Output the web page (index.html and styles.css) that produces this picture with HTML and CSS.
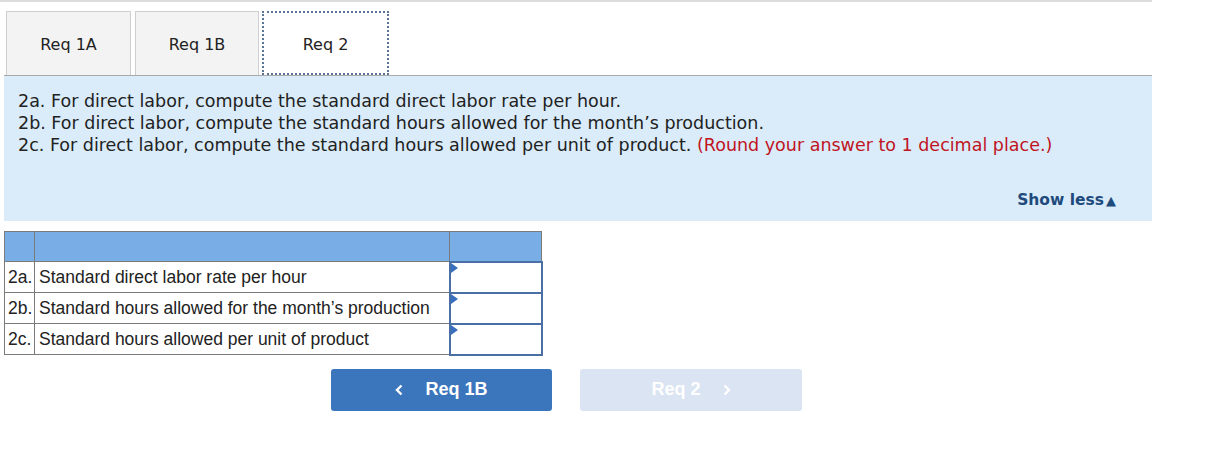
FILE: index.html
```html
<!DOCTYPE html>
<html>
<head>
<meta charset="utf-8">
<link rel="stylesheet" href="styles.css">
</head>
<body>
<div class="page">
  <div class="topbar"></div>
  <div class="tabs">
    <div class="tab t1">Req 1A</div>
    <div class="tab t2">Req 1B</div>
    <div class="tab t3 active">Req 2</div>
  </div>
  <div class="panel">
    <p class="line">2a. For direct labor, compute the standard direct labor rate per hour.</p>
    <p class="line">2b. For direct labor, compute the standard hours allowed for the month’s production.</p>
    <p class="line">2c. For direct labor, compute the standard hours allowed per unit of product. <span class="red">(Round your answer to 1 decimal place.)</span></p>
    <div class="showless">Show less<span class="tri">▲</span></div>
  </div>
  <table class="grid">
    <tr class="head"><td class="c1"></td><td class="c2"></td><td class="c3"></td></tr>
    <tr><td class="c1">2a.</td><td class="c2">Standard direct labor rate per hour</td><td class="c3 inp"><span class="flag"></span></td></tr>
    <tr><td class="c1">2b.</td><td class="c2">Standard hours allowed for the month’s production</td><td class="c3 inp"><span class="flag"></span></td></tr>
    <tr><td class="c1">2c.</td><td class="c2">Standard hours allowed per unit of product</td><td class="c3 inp"><span class="flag"></span></td></tr>
  </table>
  <div class="nav">
    <div class="btn prev"><svg class="chev l" width="8" height="12" viewBox="0 0 8 12"><path d="M6.5 1.5 L2 6 L6.5 10.5" fill="none" stroke="#fff" stroke-width="2.4"/></svg>Req 1B</div>
    <div class="btn next">Req 2<svg class="chev r" width="8" height="12" viewBox="0 0 8 12"><path d="M1.5 1.5 L6 6 L1.5 10.5" fill="none" stroke="#fff" stroke-width="2.4"/></svg></div>
  </div>
</div>
</body>
</html>
```
FILE: styles.css
```css
html, body { margin: 0; padding: 0; background: #fff; }
.page { width: 1215px; font-family: "DejaVu Sans", Verdana, sans-serif; color: #222; }
.topbar { width: 1152px; height: 2px; background: #dcdcdc; }
.tabs { display: flex; margin: 9px 0 0 6px; height: 64px; }
.tab { box-sizing: border-box; height: 64px; display: flex; align-items: center; justify-content: center; font-size: 16px; background: #f3f3f3; border: 1px solid #cfcfcf; border-bottom: none; color: #222; padding-top: 2px; }
.t1 { width: 125px; }
.t2 { width: 124px; margin-left: 4px; }
.t3 { width: 127px; margin-left: 3px; }
.tab.active { background: #fff; border: 2px dotted #5b7396; }
.panel { box-sizing: border-box; width: 1148px; margin-left: 4px; height: 146px; background: #daecfa; border-top: 1px solid #a9a9a9; padding: 14px 0 0 14px; position: relative; }
.line { margin: 0; font-size: 17.5px; line-height: 22px; color: #222; }
.red { color: #c0141f; }
.showless { position: absolute; right: 36px; top: 115px; font-size: 15.5px; font-weight: bold; color: #1e4a7c; }
.tri { font-size: 13px; margin-left: 2px; }
.grid { border-collapse: collapse; margin: 10px 0 0 4px; font-family: Arial, "Liberation Sans", sans-serif; font-size: 17.5px; color: #222; table-layout: fixed; }
.grid td { box-sizing: border-box; border: 1px solid #7b7b7b; padding: 0; height: 31px; }
.grid .head td { background: #78ade6; height: 30px; }
.grid .c1 { width: 30px; padding-left: 3px; }
.grid .c2 { width: 415px; padding-left: 4px; }
.grid .c3 { width: 92px; }
.grid .inp { position: relative; border: 2px solid #4a6fa5; background: #fff; }
.flag { position: absolute; left: 0; top: 0; width: 0; height: 0; border-top: 5px solid transparent; border-bottom: 5px solid transparent; border-left: 7px solid #3a6fbf; }
.nav { display: flex; margin: 13px 0 0 331px; gap: 28px; }
.btn { box-sizing: border-box; width: 221px; height: 42px; border-radius: 3px; display: flex; align-items: center; justify-content: center; font-family: Arial, "Liberation Sans", sans-serif; font-weight: bold; font-size: 18px; }
.prev { background: #3b76bc; color: #fff; }
.next { background: #dae4f2; color: #fff; width: 222px; }
.chev.l { margin-right: 22px; }
.chev.r { margin-left: 22px; }
```
